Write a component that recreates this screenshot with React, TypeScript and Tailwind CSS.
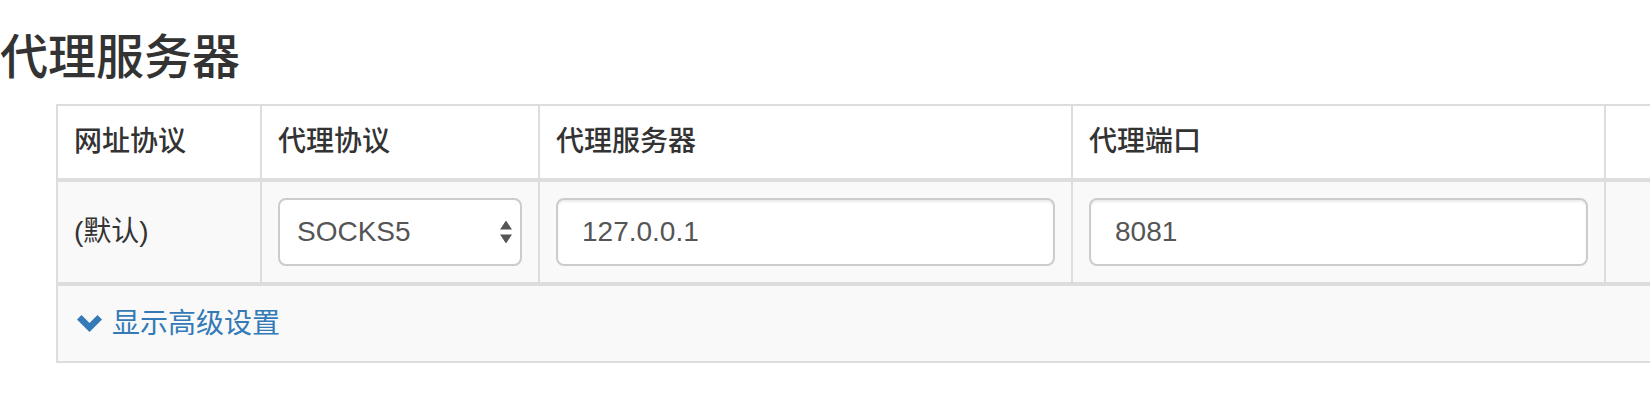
import { ChangeEvent, useState } from "react";

const FONT = "font-['Liberation_Sans','Noto_Sans_CJK_SC',sans-serif]";

const COLUMNS = [
  { key: "url", label: "网址协议", width: "w-[204px]" },
  { key: "proto", label: "代理协议", width: "w-[278px]" },
  { key: "host", label: "代理服务器", width: "w-[533px]" },
  { key: "port", label: "代理端口", width: "w-[533px]" },
  { key: "extra", label: "", width: "" },
];

function SelectArrows() {
  return (
    <svg width="12" height="23" viewBox="0 0 12 23" className="absolute right-[10px] top-1/2 -translate-y-1/2 pointer-events-none">
      <polygon points="6,0 12,9 0,9" fill="#555" />
      <polygon points="0,14 12,14 6,23" fill="#555" />
    </svg>
  );
}

function ChevronDown() {
  return (
    <svg width="25" height="17" viewBox="0 0 25 17" className="shrink-0">
      <polygon points="0,4.5 4.5,0 12.5,8 20.5,0 25,4.5 12.5,17" fill="#337ab7" />
    </svg>
  );
}

export default function App() {
  const [proto, setProto] = useState("SOCKS5");
  const [host, setHost] = useState("127.0.0.1");
  const [port, setPort] = useState("8081");

  const inputCls =
    "w-full h-[68px] border-2 border-[#ccc] rounded-[8px] bg-white px-6 text-[28px] text-[#555] outline-none shadow-[inset_0_2px_2px_rgba(0,0,0,0.075)]";

  return (
    <div className={`w-[1650px] h-[400px] overflow-hidden bg-white text-[#333] ${FONT}`}>
      <h3 className="pt-[31px] text-[48px] leading-[53px] font-medium">代理服务器</h3>

      <div className="ml-[56px] mt-[20px] overflow-hidden">
        <table className="w-[1700px] table-fixed border-separate border-spacing-0 border-l-2 border-t-2 border-b-2 border-[#ddd]">
          <colgroup>
            {COLUMNS.map((c) => (
              <col key={c.key} className={c.width} />
            ))}
          </colgroup>
          <thead>
            <tr className="bg-white">
              {COLUMNS.map((c) => (
                <th
                  key={c.key}
                  className="p-4 text-left align-bottom text-[28px] leading-[40px] font-medium border-b-4 border-r-2 border-[#ddd]"
                >
                  {c.label}
                </th>
              ))}
            </tr>
          </thead>
          <tbody>
            <tr className="bg-[#f9f9f9]">
              <td className="p-4 align-middle text-[28px] leading-[40px] border-b-4 border-r-2 border-[#ddd]">(默认)</td>
              <td className="p-4 align-middle border-b-4 border-r-2 border-[#ddd]">
                <div className="relative">
                  <select
                    value={proto}
                    onChange={(e: ChangeEvent<HTMLSelectElement>) => setProto(e.target.value)}
                    className="appearance-none w-full h-[68px] border-2 border-[#ccc] rounded-[8px] bg-white pl-[17px] pr-8 text-[28px] text-[#555] outline-none"
                  >
                    <option>SOCKS5</option>
                    <option>SOCKS4</option>
                    <option>HTTP</option>
                    <option>HTTPS</option>
                  </select>
                  <SelectArrows />
                </div>
              </td>
              <td className="p-4 align-middle border-b-4 border-r-2 border-[#ddd]">
                <input value={host} onChange={(e) => setHost(e.target.value)} className={inputCls} />
              </td>
              <td className="p-4 align-middle border-b-4 border-r-2 border-[#ddd]">
                <input value={port} onChange={(e) => setPort(e.target.value)} className={inputCls} />
              </td>
              <td className="p-4 border-b-4 border-[#ddd]" />
            </tr>
          </tbody>
          <tbody>
            <tr className="bg-[#f9f9f9]">
              <td colSpan={5} className="px-4 h-[75px] align-middle">
                <a href="#" className="flex items-center text-[28px] leading-[40px] text-[#337ab7]">
                  <span className="w-[28px] pl-[3px] flex items-center">
                    <ChevronDown />
                  </span>
                  <span className="ml-[10px]">显示高级设置</span>
                </a>
              </td>
            </tr>
          </tbody>
        </table>
      </div>
    </div>
  );
}
